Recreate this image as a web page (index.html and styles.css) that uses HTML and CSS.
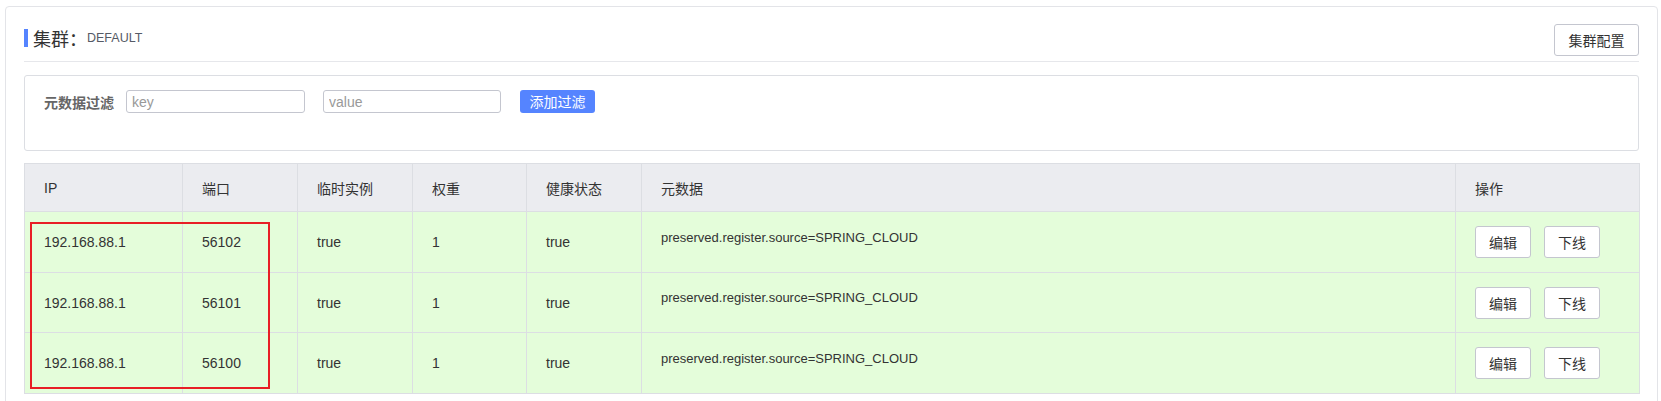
FILE: index.html
```html
<!DOCTYPE html>
<html lang="zh-CN">
<head>
<meta charset="utf-8">
<title>集群</title>
<link rel="stylesheet" href="styles.css">
</head>
<body>
<div class="card">
  <div class="title-row">
    <div class="title">
      <span class="title-bar"></span>
      <span class="title-main">集群：</span>
      <span class="title-sub">DEFAULT</span>
    </div>
    <button class="btn">集群配置</button>
  </div>

  <div class="filter-box">
    <div class="filter-row">
      <span class="filter-label">元数据过滤</span>
      <input class="input input-key" placeholder="key">
      <input class="input input-value" placeholder="value">
      <button class="btn-primary">添加过滤</button>
    </div>
  </div>

  <div class="table-wrap">
    <table class="table">
      <colgroup>
        <col class="c-ip"><col class="c-port"><col class="c-eph"><col class="c-weight"><col class="c-health"><col class="c-meta"><col class="c-op">
      </colgroup>
      <thead>
        <tr><th>IP</th><th>端口</th><th>临时实例</th><th>权重</th><th>健康状态</th><th>元数据</th><th>操作</th></tr>
      </thead>
      <tbody>
        <tr>
          <td>192.168.88.1</td><td>56102</td><td>true</td><td>1</td><td>true</td>
          <td><div class="meta">preserved.register.source=SPRING_CLOUD</div></td>
          <td><div class="ops"><button class="btn btn-sm">编辑</button><button class="btn btn-sm">下线</button></div></td>
        </tr>
        <tr class="r2">
          <td>192.168.88.1</td><td>56101</td><td>true</td><td>1</td><td>true</td>
          <td><div class="meta">preserved.register.source=SPRING_CLOUD</div></td>
          <td><div class="ops"><button class="btn btn-sm">编辑</button><button class="btn btn-sm">下线</button></div></td>
        </tr>
        <tr>
          <td>192.168.88.1</td><td>56100</td><td>true</td><td>1</td><td>true</td>
          <td><div class="meta">preserved.register.source=SPRING_CLOUD</div></td>
          <td><div class="ops"><button class="btn btn-sm">编辑</button><button class="btn btn-sm">下线</button></div></td>
        </tr>
      </tbody>
    </table>
    <div class="highlight"></div>
  </div>
</div>
</body>
</html>
```

FILE: styles.css
```css
html, body {
  margin: 0;
  padding: 0;
  background: #ffffff;
}
body {
  font-family: "Liberation Sans", "Noto Sans CJK SC", sans-serif;
  font-size: 14px;
  color: #333333;
  overflow: hidden;
}
.card {
  margin: 6px 3px 0 5px;
  border: 1px solid #e3e4e8;
  border-radius: 4px;
  padding: 17px 18px 20px 18px;
}
.title-row {
  display: flex;
  justify-content: space-between;
  align-items: center;
  height: 32px;
  padding-bottom: 5px;
  border-bottom: 1px solid #e6e7eb;
}
.title {
  display: flex;
  align-items: center;
  margin-bottom: 4px;
}
.title-bar {
  width: 4px;
  height: 18px;
  background: #5584ff;
  margin-right: 5px;
}
.title-main {
  font-family: "Noto Sans CJK SC", sans-serif;
  font-size: 18px;
  line-height: 22px;
  color: #333333;
}
.title-sub {
  font-size: 12.5px;
  color: #555a66;
  margin-left: 0;
}
.btn {
  font-family: "Liberation Sans", "Noto Sans CJK SC", sans-serif;
  font-size: 14px;
  color: #333333;
  background: #ffffff;
  border: 1px solid #c4c6cf;
  border-radius: 3px;
  height: 32px;
  padding: 0 14px;
  cursor: pointer;
}
.title-row .btn {
  width: 85px;
  padding: 0;
}
.filter-box {
  margin-top: 13px;
  height: 76px;
  box-sizing: border-box;
  border: 1px solid #dcdee3;
  border-radius: 3px;
  padding: 14px 19px 0 19px;
}
.filter-row {
  display: flex;
  align-items: center;
  height: 23px;
}
.filter-label {
  font-weight: 600;
  color: #666666;
  font-size: 14px;
  width: 70px;
  margin-right: 12px;
}
.input {
  box-sizing: border-box;
  height: 23px;
  border: 1px solid #c4c6cf;
  border-radius: 3px;
  padding: 0 5px;
  font-family: "Liberation Sans", "Noto Sans CJK SC", sans-serif;
  font-size: 14px;
  color: #333333;
  outline: none;
}
.input::placeholder {
  color: #999999;
}
.input-key {
  width: 179px;
  margin-right: 18px;
}
.input-value {
  width: 178px;
  margin-right: 19px;
}
.btn-primary {
  box-sizing: border-box;
  height: 23px;
  width: 75px;
  padding: 0;
  border: none;
  border-radius: 3px;
  background: #5584ff;
  color: #ffffff;
  font-family: "Noto Sans CJK SC", sans-serif;
  font-size: 14px;
  line-height: 23px;
}
.table-wrap {
  position: relative;
  margin-top: 12px;
}
.table {
  width: 1615px;
  table-layout: fixed;
  border-collapse: collapse;
}
.c-ip { width: 158px; }
.c-port { width: 115px; }
.c-eph { width: 115px; }
.c-weight { width: 114px; }
.c-health { width: 115px; }
.c-meta { width: 814px; }
.c-op { width: 184px; }
.table th,
.table td {
  border: 1px solid #dcdee3;
  text-align: left;
  padding: 0 19px;
  font-weight: normal;
  color: #333333;
  font-size: 14px;
}
.table th {
  background: #ebecf0;
  height: 47px;
}
.table td {
  background: #e4fdda;
  height: 60px;
}
.table tr.r2 td {
  height: 59px;
}
.meta {
  margin-bottom: 10px;
  font-size: 13px;
}
.ops {
  display: flex;
  gap: 13px;
}
.btn-sm {
  width: 56px;
  height: 32px;
  padding: 0;
}
.highlight {
  position: absolute;
  left: 6px;
  top: 59px;
  width: 240px;
  height: 167px;
  box-sizing: border-box;
  border: 2px solid #e81e25;
  pointer-events: none;
}
```
